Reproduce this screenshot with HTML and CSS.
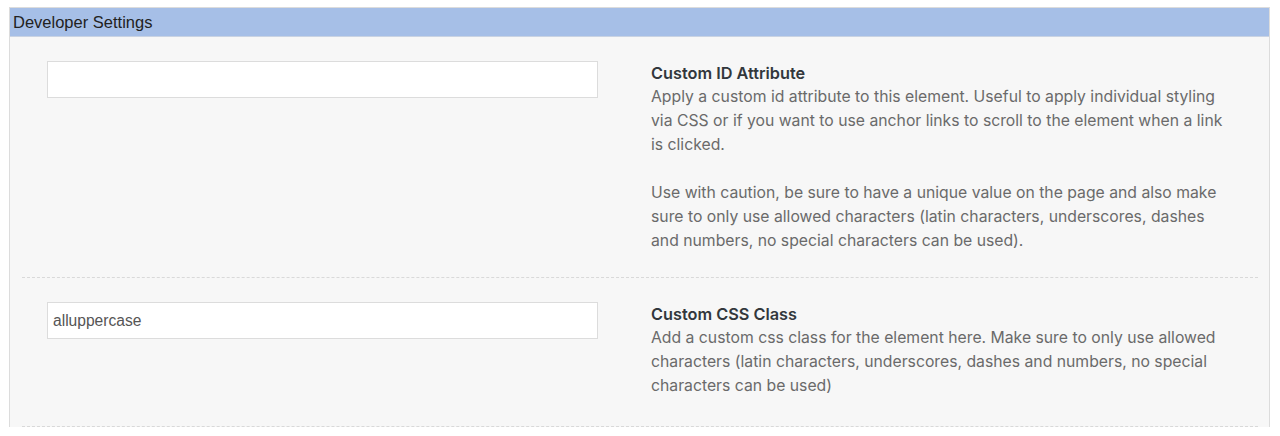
FILE: index.html
```html
<!DOCTYPE html>
<html>
<head>
<meta charset="utf-8">
<link rel="stylesheet" href="styles.css">
</head>
<body>
<div class="panel">
  <div class="panel-header">Developer Settings</div>
  <div class="panel-body">
    <div class="row">
      <div class="field"><input class="text-input" type="text" value=""></div>
      <div class="info">
        <div class="title">Custom ID Attribute</div>
        <p class="desc">Apply a custom id attribute to this element. Useful to apply individual styling via CSS or if you want to use anchor links to scroll to the element when a link is clicked.</p>
        <p class="desc">Use with caution, be sure to have a unique value on the page and also make sure to only use allowed characters (latin characters, underscores, dashes and numbers, no special characters can be used).</p>
      </div>
    </div>
    <div class="row">
      <div class="field"><input class="text-input" type="text" value="alluppercase"></div>
      <div class="info">
        <div class="title">Custom CSS Class</div>
        <p class="desc">Add a custom css class for the element here. Make sure to only use allowed characters (latin characters, underscores, dashes and numbers, no special characters can be used)</p>
      </div>
    </div>
  </div>
</div>
</body>
</html>
```
FILE: styles.css
```css
html, body {
  margin: 0;
  padding: 0;
  background: #ffffff;
}
body {
  padding: 7px 10px 0 9px;
}
.panel {
  border: 1px solid #dcdcdc;
  border-bottom: none;
  background: #f7f7f7;
}
.panel-header {
  background: #a6bfe7;
  height: 28px;
  line-height: 28px;
  padding-left: 3px;
  font-family: "Liberation Sans", Arial, sans-serif;
  font-size: 16.5px;
  color: #222;
  border-bottom: 1px solid #c9d3e3;
}
.panel-body {
  padding: 0 11px 0 12px;
}
.row {
  display: grid;
  grid-template-columns: 551px 1fr;
  column-gap: 53px;
  padding: 24px 25px 24px 25px;
  border-bottom: 1px dashed #d9d9d9;
}
.row:last-child {
  padding-bottom: 28px;
}
.text-input {
  box-sizing: border-box;
  width: 100%;
  height: 37px;
  border: 1px solid #dcdcdc;
  background: #fff;
  padding: 0 5px;
  font-family: "Liberation Sans", Arial, sans-serif;
  font-size: 15.6px;
  color: #555;
  outline: none;
  margin: 0;
}
.info {
  font-family: Inter, "Noto Sans", sans-serif;
  font-size: 15.75px;
  line-height: 24px;
  color: #6a6a6a;
  padding-right: 10px;
}
.title {
  font-weight: 600;
  font-size: 16.3px;
  color: #32373c;
}
.desc {
  margin: 0 0 24px 0;
}
.desc:last-child {
  margin-bottom: 0;
}
```
